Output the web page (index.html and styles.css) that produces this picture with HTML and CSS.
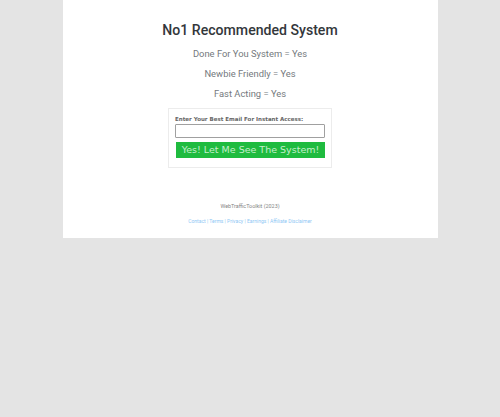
FILE: index.html
```html
<!DOCTYPE html>
<html lang="en">
<head>
    <meta charset="UTF-8">
    <meta name="viewport" content="width=device-width, initial-scale=1.0">
    <title>No1 Recommended System</title>
    <link rel="stylesheet" href="styles.css">
</head>
<body>
    <div class="container">
        <h1>No1 Recommended System</h1>
        <p class="point">Done For You System = Yes</p>
        <p class="point">Newbie Friendly = Yes</p>
        <p class="point">Fast Acting = Yes</p>

        <form class="signup">
            <label class="signup-label" for="email">Enter Your Best Email For Instant Access:</label>
            <input class="signup-input" id="email" type="text">
            <button class="signup-button" type="button">Yes! Let Me See The System!</button>
        </form>

        <p class="copyright">WebTrafficToolkit (2023)</p>
        <div class="links">Contact | Terms | Privacy | Earnings | Affiliate Disclaimer</div>
    </div>
</body>
</html>
```

FILE: styles.css
```css
html, body {
    height: 100%;
}
body {
    margin: 0;
    background: #e4e4e4;
    font-family: 'Roboto', 'Liberation Sans', Arial, sans-serif;
    overflow: hidden;
}
.container {
    width: 375px;
    height: 238px;
    margin: 0 auto;
    box-sizing: border-box;
    padding-top: 21px;
    background: #ffffff;
    text-align: center;
}
h1 {
    margin: 0 0 9px;
    font-size: 14.1px;
    line-height: 18px;
    font-weight: 500;
    color: #33373b;
}
.point {
    margin: 0 0 8px;
    font-size: 9.4px;
    line-height: 12px;
    color: #74797d;
}
.signup {
    width: 164px;
    height: 60px;
    margin: 7px auto 0;
    box-sizing: border-box;
    padding: 7px 6px 0;
    border: 1px solid #ececec;
    text-align: left;
}
.signup-label {
    display: block;
    font-family: 'DejaVu Sans', Verdana, sans-serif;
    font-size: 5.5px;
    line-height: 7px;
    font-weight: 700;
    color: #666666;
    white-space: nowrap;
}
.signup-input {
    display: block;
    width: 150px;
    height: 14px;
    margin: 1px 0 0;
    box-sizing: border-box;
    padding: 0;
    border: 1px solid #a0a0a0;
    border-radius: 1px;
    background: #ffffff;
}
.signup-button {
    display: block;
    width: 149px;
    height: 16px;
    margin: 4px 0 0 1px;
    padding: 0;
    border: none;
    background: #1fbb3f;
    color: #c4efcc;
    font-family: 'DejaVu Sans', Verdana, sans-serif;
    font-size: 9.5px;
    line-height: 16px;
    white-space: nowrap;
}
.copyright {
    margin: 35px 0 0;
    font-size: 5.4px;
    line-height: 7px;
    color: #858585;
}
.links {
    margin-top: 8px;
    font-size: 5px;
    line-height: 7px;
    color: #8fc8f5;
}
```
